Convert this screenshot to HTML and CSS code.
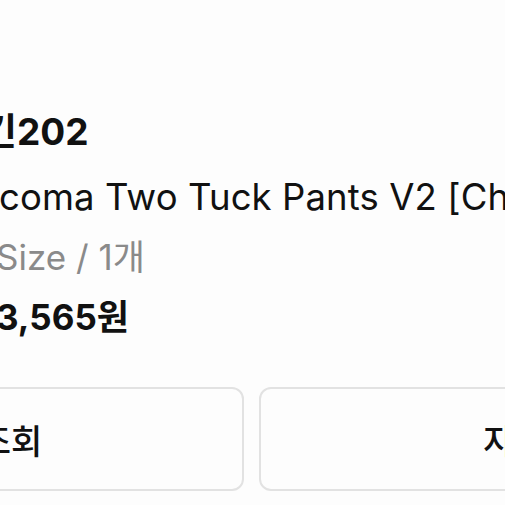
FILE: index.html
```html
<!DOCTYPE html>
<html lang="ko">
<head>
<meta charset="utf-8">
<link rel="stylesheet" href="styles.css">
</head>
<body>
<main class="sheet">
  <section class="info">
    <div class="seller">긴202</div>
    <div class="name">coma Two Tuck Pants V2 [Ch</div>
    <div class="option">Size / 1개</div>
    <div class="price">3,565원</div>
  </section>
  <div class="actions">
    <button class="btn btn-left">조회</button>
    <button class="btn btn-right">자</button>
  </div>
</main>
</body>
</html>
```
FILE: styles.css
```css
html, body {
  margin: 0;
  padding: 0;
  background: #fdfdfd;
  width: 505px;
  height: 505px;
  overflow: hidden;
}
.sheet {
  font-family: Inter, "Noto Sans CJK KR", sans-serif;
  color: #111;
  padding-top: 102px;
}
.info {
  display: flex;
  flex-direction: column;
  white-space: nowrap;
}
.seller {
  font-size: 37px;
  font-weight: 700;
  line-height: 60px;
  height: 60px;
  margin-bottom: 5px;
  margin-left: -17px;
}
.name {
  font-size: 36.5px;
  font-weight: 400;
  line-height: 60px;
  height: 60px;
  margin-left: -1px;
  letter-spacing: 0.1px;
}
.option {
  font-size: 35px;
  color: #8a8a8a;
  line-height: 60px;
  height: 60px;
  margin-left: -4px;
}
.price {
  font-size: 35px;
  font-weight: 700;
  line-height: 60px;
  height: 60px;
  margin-left: -4px;
}
.actions {
  display: flex;
  gap: 15px;
  margin-top: 40px;
  margin-left: -222px;
}
.btn {
  flex: none;
  height: 104px;
  box-sizing: border-box;
  border: 2px solid #e2e2e2;
  border-radius: 12px;
  background: #fdfdfd;
  font-family: Inter, "Noto Sans CJK KR", sans-serif;
  font-size: 34px;
  font-weight: 500;
  color: #111;
  display: flex;
  align-items: center;
  justify-content: center;
  padding: 0;
}
.btn-left { width: 466px; }
.btn-right { width: 480px; }
```
